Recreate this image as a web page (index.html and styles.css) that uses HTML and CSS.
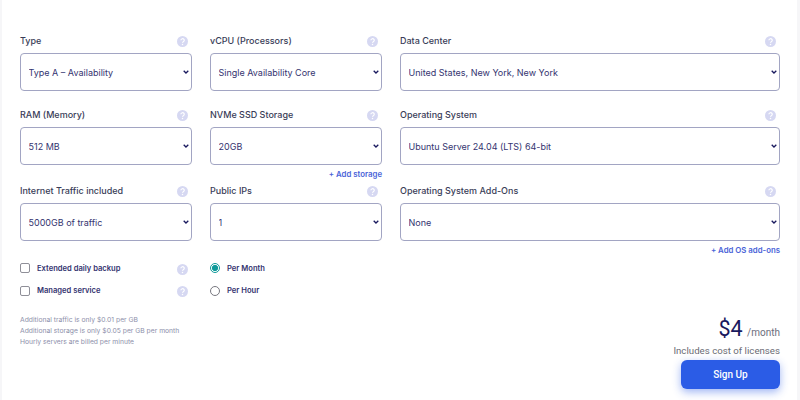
FILE: index.html
```html
<!DOCTYPE html>
<html lang="en">
<head>
<meta charset="utf-8">
<title>Server configuration</title>
<link rel="stylesheet" href="styles.css">
</head>
<body>
<main class="page">
  <svg class="defs" width="0" height="0" aria-hidden="true">
    <symbol id="help" viewBox="0 0 12 12">
      <circle cx="6" cy="6" r="6" fill="#d6d8f2"/>
      <path d="M4.3 4.7a1.8 1.7 0 1 1 2.6 1.5c-.6.3-.9.6-.9 1.2" fill="none" stroke="#fff" stroke-width="1.3"/>
      <circle cx="6" cy="9.2" r=".8" fill="#fff"/>
    </symbol>
  </svg>
  <form class="grid">
    <div class="field">
      <div class="label-row"><label class="label">Type</label><svg class="help"><use href="#help"/></svg></div>
      <select class="select"><option>Type A – Availability</option></select>
    </div>
    <div class="field">
      <div class="label-row"><label class="label">vCPU (Processors)</label><svg class="help"><use href="#help"/></svg></div>
      <select class="select"><option>Single Availability Core</option></select>
    </div>
    <div class="field">
      <div class="label-row"><label class="label">Data Center</label><svg class="help"><use href="#help"/></svg></div>
      <select class="select"><option>United States, New York, New York</option></select>
    </div>

    <div class="field">
      <div class="label-row"><label class="label">RAM (Memory)</label><svg class="help"><use href="#help"/></svg></div>
      <select class="select"><option>512 MB</option></select>
    </div>
    <div class="field">
      <div class="label-row"><label class="label">NVMe SSD Storage</label><svg class="help"><use href="#help"/></svg></div>
      <select class="select"><option>20GB</option></select>
      <a class="add-link">+ Add storage</a>
    </div>
    <div class="field">
      <div class="label-row"><label class="label">Operating System</label><svg class="help"><use href="#help"/></svg></div>
      <select class="select"><option>Ubuntu Server 24.04 (LTS) 64-bit</option></select>
    </div>

    <div class="field">
      <div class="label-row"><label class="label">Internet Traffic included</label><svg class="help"><use href="#help"/></svg></div>
      <select class="select"><option>5000GB of traffic</option></select>
    </div>
    <div class="field">
      <div class="label-row"><label class="label">Public IPs</label><svg class="help"><use href="#help"/></svg></div>
      <select class="select"><option>1</option></select>
    </div>
    <div class="field">
      <div class="label-row"><label class="label">Operating System Add-Ons</label><svg class="help"><use href="#help"/></svg></div>
      <select class="select"><option>None</option></select>
      <a class="add-link">+ Add OS add-ons</a>
    </div>

    <div class="options">
      <div class="option"><span class="check"></span><span class="option-text">Extended daily backup</span><svg class="help"><use href="#help"/></svg></div>
      <div class="option"><span class="check"></span><span class="option-text">Managed service</span><svg class="help"><use href="#help"/></svg></div>
    </div>
    <div class="options">
      <div class="option"><span class="radio radio-on"></span><span class="option-text">Per Month</span></div>
      <div class="option"><span class="radio"></span><span class="option-text">Per Hour</span></div>
    </div>
  </form>
  <footer class="bottom">
    <div class="notes">
      <p>Additional traffic is only $0.01 per GB</p>
      <p>Additional storage is only $0.05 per GB per month</p>
      <p>Hourly servers are billed per minute</p>
    </div>
    <div class="summary">
      <div class="price"><span class="amount">$4</span> <span class="period">/month</span></div>
      <div class="licenses">Includes cost of licenses</div>
      <button class="signup" type="button">Sign Up</button>
    </div>
  </footer>
</main>
</body>
</html>
```
FILE: styles.css
```css
* { box-sizing: border-box; }
html, body { margin: 0; height: 100%; }
body {
  background: #fff;
  font-family: Inter, "Liberation Sans", sans-serif;
  color: #2c2f52;
  overflow: hidden;
}
.defs { position: absolute; }
.page {
  width: 800px;
  height: 400px;
  padding: 33px 17px 0 18px;
  border-left: 2px solid #f6f6f8;
  border-right: 3px solid #f6f6f8;
}
.grid {
  display: grid;
  grid-template-columns: 172px 172px 1fr;
  column-gap: 18px;
  grid-template-rows: 74px 76px 74px 44px;
}
.label-row {
  display: flex;
  justify-content: space-between;
  align-items: center;
  height: 15px;
  margin-bottom: 5px;
}
.label {
  font-size: 9px;
  font-weight: 500;
  color: #3a3d58;
}
.help {
  width: 11px;
  height: 11px;
  margin-right: 4px;
  margin-top: 2px;
  flex: none;
}
.select {
  display: block;
  width: 100%;
  height: 38px;
  padding: 0 16px 0 7.5px;
  font-family: inherit;
  font-size: 9px;
  font-weight: 400;
  color: #34336f;
  appearance: none;
  background: #fff url("data:image/svg+xml,%3Csvg xmlns='http://www.w3.org/2000/svg' width='6' height='4' viewBox='0 0 6 4'%3E%3Cpath d='M.7.7 3 3l2.3-2.3' fill='none' stroke='%2319195e' stroke-width='1.3'/%3E%3C/svg%3E") no-repeat right 2px center;
  border: 1px solid #a2a5c3;
  border-radius: 4px;
}
.add-link {
  display: block;
  text-align: right;
  margin-top: 3px;
  font-size: 7.8px;
  font-weight: 600;
  line-height: 12px;
  color: #4a63d8;
}
.options {
  display: flex;
  flex-direction: column;
  gap: 10.5px;
  padding-top: 5px;
}
.option {
  display: flex;
  align-items: center;
  height: 12px;
}
.check {
  width: 10px;
  height: 10px;
  border: 1px solid #8f8f98;
  border-radius: 2px;
  flex: none;
  margin-right: 7px;
}
.radio {
  width: 10px;
  height: 10px;
  border: 1px solid #77777f;
  border-radius: 50%;
  flex: none;
  margin-right: 7px;
}
.radio-on {
  border-color: #0f9a9a;
  background: radial-gradient(circle, #0f9a9a 0 2.8px, #fff 3.3px);
}
.option-text {
  font-size: 7.6px;
  font-weight: 600;
  color: #34336f;
  flex: 1;
}
.bottom {
  display: flex;
  justify-content: space-between;
  align-items: flex-start;
  margin-top: 2px;
}
.notes {
  padding-top: 11px;
  font-size: 6.75px;
  line-height: 11px;
  color: #8d8faa;
}
.notes p { margin: 0; }
.summary {
  display: flex;
  flex-direction: column;
  align-items: flex-end;
  margin-top: 14px;
}
.price {
  line-height: 24px;
  height: 24px;
  color: #19195e;
}
.amount {
  font-family: Roboto, sans-serif;
  font-size: 21.5px;
  font-weight: 400;
}
.period {
  font-family: Roboto, sans-serif;
  font-size: 10px;
  color: #6c6e7c;
}
.licenses {
  font-family: Roboto, sans-serif;
  font-size: 9.7px;
  font-weight: 400;
  line-height: 13px;
  margin-top: 3px;
  color: #6a6b74;
}
.signup {
  margin-top: 3px;
  width: 99px;
  height: 29px;
  border: 0;
  border-radius: 6px;
  background: #2b5ce6;
  box-shadow: 0 3px 8px rgba(43, 92, 230, .45);
  color: #fff;
  font-family: Roboto, sans-serif;
  font-size: 10px;
  font-weight: 500;
}
```
